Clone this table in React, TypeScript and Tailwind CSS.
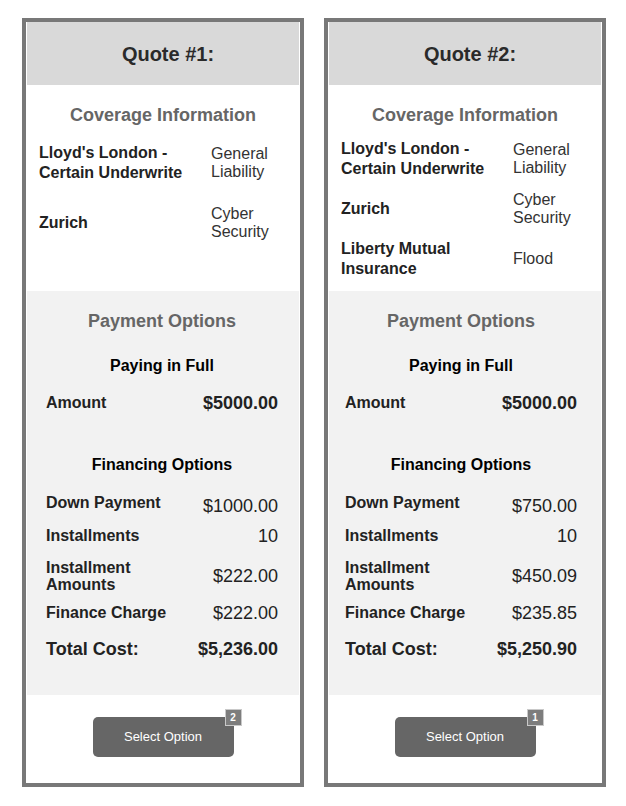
import React from "react";

type Cov = { name: string[]; type: string[] };
type Quote = {
  title: string;
  cov: Cov[];
  rowH: string;
  rowsMt: string;
  payPad: string;
  down: string;
  inst: string;
  instAmt: string;
  charge: string;
  total: string;
  badge: string;
};

const quotes: Quote[] = [
  {
    title: "Quote #1:",
    cov: [
      { name: ["Lloyd's London -", "Certain Underwrite"], type: ["General", "Liability"] },
      { name: ["Zurich"], type: ["Cyber", "Security"] },
    ],
    rowH: "h-[60px]",
    rowsMt: "mt-[7px]",
    payPad: "pl-[19px] pr-[21px]",
    down: "$1000.00",
    inst: "10",
    instAmt: "$222.00",
    charge: "$222.00",
    total: "$5,236.00",
    badge: "2",
  },
  {
    title: "Quote #2:",
    cov: [
      { name: ["Lloyd's London -", "Certain Underwrite"], type: ["General", "Liability"] },
      { name: ["Zurich"], type: ["Cyber", "Security"] },
      { name: ["Liberty Mutual", "Insurance"], type: ["Flood"] },
    ],
    rowH: "h-[50px]",
    rowsMt: "mt-[8px]",
    payPad: "pl-[16px] pr-[24px]",
    down: "$750.00",
    inst: "10",
    instAmt: "$450.09",
    charge: "$235.85",
    total: "$5,250.90",
    badge: "1",
  },
];

function Card({ q }: { q: Quote }) {
  return (
    <div className="w-[282px] h-[769px] border-[4px] border-[#787878] bg-white flex flex-col px-[1px]">
      <div className="h-[63px] bg-[#d9d9d9] flex items-center justify-center pl-[10px]">
        <span className="text-[20px] leading-[24px] font-bold text-[#2a2a2a]">{q.title}</span>
      </div>
      <div className="h-[206px] pt-[19px] flex flex-col">
        <div className="text-center text-[18px] leading-[22px] font-bold text-[#666666]">
          Coverage Information
        </div>
        <div className={q.rowsMt}>
          {q.cov.map((c, i) => (
            <div key={i} className={`${q.rowH} flex items-center pl-[12px]`}>
              <div className="w-[172px] text-[16px] leading-[20px] font-bold text-[#222222] whitespace-nowrap overflow-hidden">
                {c.name.map((n, j) => (
                  <div key={j}>{n}</div>
                ))}
              </div>
              <div className="flex-1 text-[16px] leading-[18px] text-[#333333]">
                {c.type.map((n, j) => (
                  <div key={j}>{n}</div>
                ))}
              </div>
            </div>
          ))}
        </div>
      </div>
      <div className={`h-[404px] bg-[#f2f2f2] pt-[19px] ${q.payPad} flex flex-col text-[#222222]`}>
        <div className="text-center text-[18px] leading-[22px] font-bold text-[#666666]">
          Payment Options
        </div>
        <div className="mt-[24px] text-center text-[16px] leading-[20px] font-bold text-black">
          Paying in Full
        </div>
        <div className="mt-[16px] h-[22px] flex items-center justify-between">
          <span className="text-[16px] leading-[20px] font-bold">Amount</span>
          <span className="text-[18px] leading-[22px] font-bold">$5000.00</span>
        </div>
        <div className="mt-[41px] text-center text-[16px] leading-[20px] font-bold text-black">
          Financing Options
        </div>
        <div className="mt-[17px] h-[22px] flex items-center justify-between">
          <span className="text-[16px] leading-[20px] font-bold">Down Payment</span>
          <span className="text-[18px] leading-[22px] mt-[5px]">{q.down}</span>
        </div>
        <div className="mt-[11px] h-[22px] flex items-center justify-between">
          <span className="text-[16px] leading-[20px] font-bold">Installments</span>
          <span className="text-[18px] leading-[22px]">{q.inst}</span>
        </div>
        <div className="mt-[12px] h-[34px] flex items-center justify-between">
          <span className="text-[16px] leading-[17px] font-bold">
            Installment
            <br />
            Amounts
          </span>
          <span className="text-[18px] leading-[22px]">{q.instAmt}</span>
        </div>
        <div className="mt-[9px] h-[22px] flex items-center justify-between">
          <span className="text-[16px] leading-[20px] font-bold">Finance Charge</span>
          <span className="text-[18px] leading-[22px]">{q.charge}</span>
        </div>
        <div className="mt-[14px] h-[22px] flex items-center justify-between">
          <span className="text-[18px] leading-[22px] font-bold">Total Cost:</span>
          <span className="text-[18px] leading-[22px] font-bold">{q.total}</span>
        </div>
      </div>
      <div className="flex-1 flex justify-center pt-[22px]">
        <div className="relative w-[141px] h-[40px] rounded-[5px] bg-[#666666] flex items-center justify-center">
          <span className="text-white text-[13px] leading-[16px]">Select Option</span>
          <div className="absolute -top-[8px] -right-[8px] w-[17px] h-[17px] bg-[#7d7d7d] border border-[#c9c9c9] flex items-center justify-center">
            <span className="text-white text-[10px] leading-[10px] font-bold">{q.badge}</span>
          </div>
        </div>
      </div>
    </div>
  );
}

export default function App() {
  return (
    <div
      className="w-[626px] h-[806px] bg-white pl-[22px] pt-[18px] flex gap-[20px] items-start"
      style={{ fontFamily: '"Liberation Sans", Arial, sans-serif' }}
    >
      {quotes.map((q) => (
        <Card key={q.title} q={q} />
      ))}
    </div>
  );
}
